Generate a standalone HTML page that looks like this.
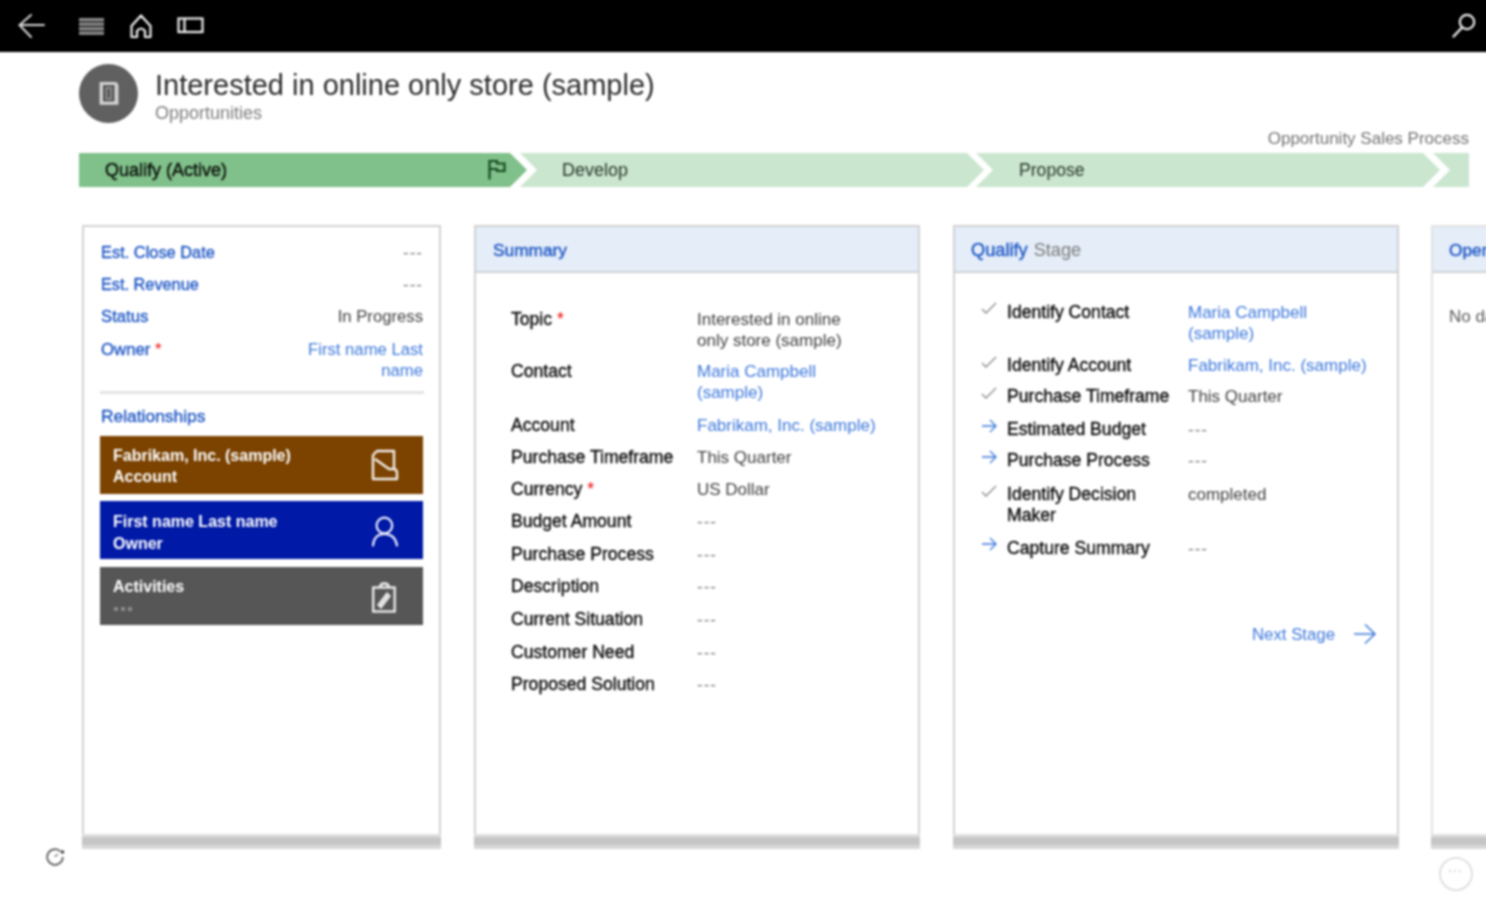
<!DOCTYPE html>
<html><head><meta charset="utf-8">
<style>
html,body{margin:0;padding:0;}
body{width:1486px;height:900px;overflow:hidden;background:#fff;position:relative;font-family:"Liberation Sans",sans-serif;}
.a{position:absolute;}
.t{position:absolute;white-space:nowrap;line-height:21px;font-size:17px;}
.topbar{left:-20px;top:-20px;width:1526px;height:71.5px;background:#000;}
.card{position:absolute;top:225px;height:620px;box-sizing:border-box;border:2px solid #d2d2d2;border-bottom:none;background:#fff;}
.card .foot{position:absolute;left:-2px;right:-2px;bottom:-4px;height:15px;background:linear-gradient(#e0e0e0 0,#e0e0e0 3px,#c6c6c6 3px,#c6c6c6 11px,#d8d8d8 11px,#d8d8d8 15px);}
.hdr{position:absolute;left:0;right:0;top:0;height:44px;background:#e4edf8;border-bottom:2px solid #cdd2d4;}
.lbl{color:#080808;-webkit-text-stroke:0.35px #080808;font-size:17.6px;}
.dash{color:#7a7a7a;letter-spacing:1px;}
.val{color:#404040;}
.link{color:#3d78dc;}
.blue{color:#1c55c4;-webkit-text-stroke:0.35px #1c55c4;}
.req{color:#e00;-webkit-text-stroke:0;}
.tile{position:absolute;left:100px;width:323px;height:58px;}
.tile .t{color:#fff;font-weight:bold;font-size:16px;}
</style></head>
<body>
<div id="root" style="position:absolute;left:0;top:0;width:1486px;height:900px;filter:blur(1px);">
<!-- top bar -->
<div class="a topbar"></div>
<svg class="a" style="left:0;top:0" width="1486" height="50">
  <g stroke="#d8d8d8" stroke-width="2" fill="none" stroke-linecap="round">
    <path d="M44 25 H20 M31 15 L19.5 25 L31 37"/>
  </g>
  <g fill="#8a8a8a">
    <rect x="79" y="18" width="25" height="3.4"/>
    <rect x="79" y="22.5" width="25" height="3.4"/>
    <rect x="79" y="27" width="25" height="3.4"/>
    <rect x="79" y="31.5" width="25" height="3.4"/>
  </g>
  <path d="M131.5 26 L141 15.5 L150.5 26 L150.5 37 L145 37 L145 31 Q141 26 137 31 L137 37 L131.5 37 Z" stroke="#f2f2f2" stroke-width="2.2" fill="none" stroke-linejoin="round"/>
  <rect x="178.5" y="18.5" width="24" height="13.5" stroke="#f2f2f2" stroke-width="2.2" fill="none"/>
  <line x1="184.5" y1="19" x2="184.5" y2="31.5" stroke="#f2f2f2" stroke-width="2.2"/>
  <circle cx="1467" cy="22" r="7.2" stroke="#eee" stroke-width="2.2" fill="none"/>
  <line x1="1462" y1="27.5" x2="1453.5" y2="36.5" stroke="#eee" stroke-width="2.4" stroke-linecap="round"/>
</svg>

<!-- header -->
<div class="a" style="left:79px;top:64px;width:59px;height:59px;border-radius:50%;background:#606060;"></div>
<svg class="a" style="left:79px;top:64px" width="60" height="60">
  <path d="M20.6 18 H35.5 Q39.4 18 39.4 22 V40.7 H20.6 Z" fill="#d4d4d4"/>
  <rect x="24" y="21" width="11.5" height="16.5" fill="#505050"/>
  <rect x="26.5" y="23" width="6.5" height="12.5" fill="#9a9a9a"/>
  <rect x="28" y="24.5" width="3.5" height="9.5" fill="#5a5a5a"/>
</svg>
<div class="t" style="left:155px;top:68px;font-size:29px;line-height:34px;color:#2b2b2b;">Interested in online only store (sample)</div>
<div class="t" style="left:155px;top:102.5px;font-size:18px;color:#7c7c7c;">Opportunities</div>
<div class="t" style="right:17px;top:128px;font-size:17px;color:#727272;">Opportunity Sales Process</div>

<!-- process bar -->
<svg class="a" style="left:0;top:150px" width="1486" height="40">
  <path d="M79 3 H510 L527 20 L510 37 H79 Z" fill="#80c08a"/>
  <path d="M520 3 H967 L984 20 L967 37 H520 L537 20 Z" fill="#cae6cf"/>
  <path d="M976 3 H1423 L1440 20 L1423 37 H976 L993 20 Z" fill="#cae6cf"/>
  <path d="M1433 3 H1469 V37 H1433 L1450 20 Z" fill="#cae6cf"/>
  <g stroke="#154a20" stroke-width="2.2" fill="none">
    <path d="M489.5 29.5 V11 H497 V13.5 H504.5 V21 H497 V19 H489.5"/>
  </g>
</svg>
<div class="t" style="left:105px;top:160px;font-size:18px;color:#0c120c;-webkit-text-stroke:0.45px #0c120c;">Qualify (Active)</div>
<div class="t" style="left:562px;top:160px;font-size:18px;color:#263528;">Develop</div>
<div class="t" style="left:1019px;top:160px;font-size:17.6px;color:#263528;">Propose</div>

<!-- card 1 -->
<div class="card" style="left:82px;width:359px;"><div class="foot"></div></div>
<div class="t blue" style="left:101px;top:242px;font-size:16.4px;">Est. Close Date</div>
<div class="t val" style="right:1063px;top:242px;"><span class="dash">---</span></div>
<div class="t blue" style="left:101px;top:274px;font-size:16.3px;">Est. Revenue</div>
<div class="t val" style="right:1063px;top:274px;"><span class="dash">---</span></div>
<div class="t blue" style="left:101px;top:306px;font-size:16.7px;">Status</div>
<div class="t val" style="right:1063px;top:306px;font-size:16.7px;">In Progress</div>
<div class="t blue" style="left:101px;top:339px;font-size:16.8px;">Owner <span style="color:#e00;-webkit-text-stroke:0;">*</span></div>
<div class="t link" style="right:1063px;top:339px;font-size:16.7px;text-align:right;">First name Last<br>name</div>
<div class="a" style="left:100px;top:391px;width:324px;height:3px;background:#e4e4e4;"></div>
<div class="t blue" style="left:101px;top:406px;font-size:17.4px;">Relationships</div>

<div class="tile" style="top:436px;background:#7b4200;">
  <div class="t" style="left:13px;top:9px;">Fabrikam, Inc. (sample)</div>
  <div class="t" style="left:13px;top:30px;">Account</div>
</div>
<div class="tile" style="top:501px;background:#0019a6;">
  <div class="t" style="left:13px;top:10px;">First name Last name</div>
  <div class="t" style="left:13px;top:32px;">Owner</div>
</div>
<div class="tile" style="top:567px;background:#565656;">
  <div class="t" style="left:13px;top:9px;">Activities</div>
  <div class="a" style="left:14px;top:40px;width:4px;height:4px;background:#8a8a8a;"></div><div class="a" style="left:21px;top:40px;width:4px;height:4px;background:#8a8a8a;"></div><div class="a" style="left:28px;top:40px;width:4px;height:4px;background:#8a8a8a;"></div>
</div>


<svg class="a" style="left:360px;top:430px" width="50" height="200">
  <g stroke="#f4f0ec" stroke-width="2.4" fill="none" stroke-linejoin="round">
    <path d="M373 455 L377 451 H394 V469" transform="translate(-360,-430)"/>
    <path d="M373 455 V479 H397 V473 Q397 469 393 469 H389 L375 459" transform="translate(-360,-430)"/>
  </g>
  <g stroke="#eef0ff" stroke-width="2.2" fill="none" stroke-linecap="round">
    <circle cx="24.4" cy="95.5" r="7.8"/>
    <path d="M13 115.5 Q14 104 24.4 104 Q35 104 37 115.5"/>
  </g>
  <g stroke="#f0f0f0" stroke-width="2.3" fill="none">
    <rect x="13.2" y="157.5" width="21.5" height="24"/>
    <path d="M20 157.5 Q20 153.5 24.4 153.5 Q28.8 153.5 28.8 157.5"/>
    <path d="M18 175 L27 163 L30 166 L21 178 Z" fill="#dcdcdc" stroke-width="1.4"/>
  </g>
</svg>

<!-- card 2 -->
<div class="card" style="left:474px;width:446px;"><div class="hdr"></div><div class="foot"></div></div>
<div class="t blue" style="left:493px;top:240px;font-size:17.3px;">Summary</div>

<!-- card2 rows -->
<div class="t lbl" style="left:511px;top:308.9px;">Topic <span class="req">*</span></div>
<div class="t val" style="left:697px;top:308.9px;">Interested in online<br>only store (sample)</div>
<div class="t lbl" style="left:511px;top:361.3px;">Contact</div>
<div class="t link" style="left:697px;top:361.3px;">Maria Campbell<br>(sample)</div>
<div class="t lbl" style="left:511px;top:415.3px;">Account</div>
<div class="t link" style="left:697px;top:415.3px;">Fabrikam, Inc. (sample)</div>
<div class="t lbl" style="left:511px;top:447.3px;">Purchase Timeframe</div>
<div class="t val" style="left:697px;top:447.3px;">This Quarter</div>
<div class="t lbl" style="left:511px;top:479.1px;">Currency <span class="req">*</span></div>
<div class="t val" style="left:697px;top:479.1px;">US Dollar</div>
<div class="t lbl" style="left:511px;top:511.3px;">Budget Amount</div>
<div class="t val" style="left:697px;top:511.3px;"><span class="dash">---</span></div>
<div class="t lbl" style="left:511px;top:543.7px;">Purchase Process</div>
<div class="t val" style="left:697px;top:543.7px;"><span class="dash">---</span></div>
<div class="t lbl" style="left:511px;top:576.0px;">Description</div>
<div class="t val" style="left:697px;top:576.0px;"><span class="dash">---</span></div>
<div class="t lbl" style="left:511px;top:609.0px;">Current Situation</div>
<div class="t val" style="left:697px;top:609.0px;"><span class="dash">---</span></div>
<div class="t lbl" style="left:511px;top:641.6px;">Customer Need</div>
<div class="t val" style="left:697px;top:641.6px;"><span class="dash">---</span></div>
<div class="t lbl" style="left:511px;top:673.9px;">Proposed Solution</div>
<div class="t val" style="left:697px;top:673.9px;"><span class="dash">---</span></div>

<!-- card 3 -->
<div class="card" style="left:953px;width:446px;"><div class="hdr"></div><div class="foot"></div></div>
<div class="t" style="left:971px;top:240px;font-size:18.2px;"><span class="blue">Qualify</span> <span style="color:#7a7a7a;margin-left:1px;">Stage</span></div>

<!-- card3 rows -->
<svg class="a" style="left:980px;top:301px" width="18" height="14"><path d="M2 8 L6 12 L16 2" stroke="#8a8a8a" stroke-width="1.3" fill="none"/></svg>
<div class="t lbl" style="left:1007px;top:301.6px;">Identify Contact</div>
<div class="t link" style="left:1188px;top:301.6px;">Maria Campbell<br>(sample)</div>
<svg class="a" style="left:980px;top:355px" width="18" height="14"><path d="M2 8 L6 12 L16 2" stroke="#8a8a8a" stroke-width="1.3" fill="none"/></svg>
<div class="t lbl" style="left:1007px;top:355.3px;">Identify Account</div>
<div class="t link" style="left:1188px;top:355.3px;">Fabrikam, Inc. (sample)</div>
<svg class="a" style="left:980px;top:386px" width="18" height="14"><path d="M2 8 L6 12 L16 2" stroke="#8a8a8a" stroke-width="1.3" fill="none"/></svg>
<div class="t lbl" style="left:1007px;top:386.3px;">Purchase Timeframe</div>
<div class="t val" style="left:1188px;top:386.3px;">This Quarter</div>
<svg class="a" style="left:980px;top:419px" width="18" height="14"><path d="M2 7 H16 M10 1 L16 7 L10 13" stroke="#3b78d8" stroke-width="1.3" fill="none"/></svg>
<div class="t lbl" style="left:1007px;top:418.9px;">Estimated Budget</div>
<div class="t val" style="left:1188px;top:418.9px;"><span class="dash">---</span></div>
<svg class="a" style="left:980px;top:450px" width="18" height="14"><path d="M2 7 H16 M10 1 L16 7 L10 13" stroke="#3b78d8" stroke-width="1.3" fill="none"/></svg>
<div class="t lbl" style="left:1007px;top:449.9px;">Purchase Process</div>
<div class="t val" style="left:1188px;top:449.9px;"><span class="dash">---</span></div>
<svg class="a" style="left:980px;top:484px" width="18" height="14"><path d="M2 8 L6 12 L16 2" stroke="#8a8a8a" stroke-width="1.3" fill="none"/></svg>
<div class="t lbl" style="left:1007px;top:484.3px;">Identify Decision<br>Maker</div>
<div class="t val" style="left:1188px;top:484.3px;">completed</div>
<svg class="a" style="left:980px;top:537px" width="18" height="14"><path d="M2 7 H16 M10 1 L16 7 L10 13" stroke="#3b78d8" stroke-width="1.3" fill="none"/></svg>
<div class="t lbl" style="left:1007px;top:537.7px;">Capture Summary</div>
<div class="t val" style="left:1188px;top:537.7px;"><span class="dash">---</span></div>
<div class="t link" style="left:1252px;top:624.4px;font-size:16.8px;">Next Stage</div>
<svg class="a" style="left:1352px;top:623px" width="26" height="22"><path d="M2 11 H23 M13 1.5 L23 11 L13 20.5" stroke="#3b78d8" stroke-width="1.5" fill="none"/></svg>
<!-- card 4 -->
<div class="card" style="left:1431px;width:200px;border-color:#e2e2e2;"><div class="hdr"></div><div class="foot"></div></div>
<div class="t blue" style="left:1449px;top:240px;font-size:17.3px;">Open Activities</div>
<div class="t val" style="left:1449px;top:306px;font-size:17px;color:#5a5a5a;">No data available</div>

<!-- bottom icons -->
<svg class="a" style="left:40px;top:842px" width="30" height="30">
  <path d="M20.5 9.5 A7.8 7.8 0 1 0 22.8 15" stroke="#555" stroke-width="1.7" fill="none"/>
  <circle cx="22.5" cy="10" r="1.7" fill="#333"/>
  <path d="M14.5 14.5 L18 12.5" stroke="#666" stroke-width="1.4"/>
</svg>
<svg class="a" style="left:1436px;top:854px" width="40" height="40">
  <circle cx="20" cy="20" r="16" stroke="#d8d8d8" stroke-width="1.6" fill="none"/>
  <g fill="#ccc"><circle cx="14" cy="17" r="1"/><circle cx="19" cy="17" r="1"/><circle cx="24" cy="17" r="1"/></g>
</svg>
</div>
</body></html>
